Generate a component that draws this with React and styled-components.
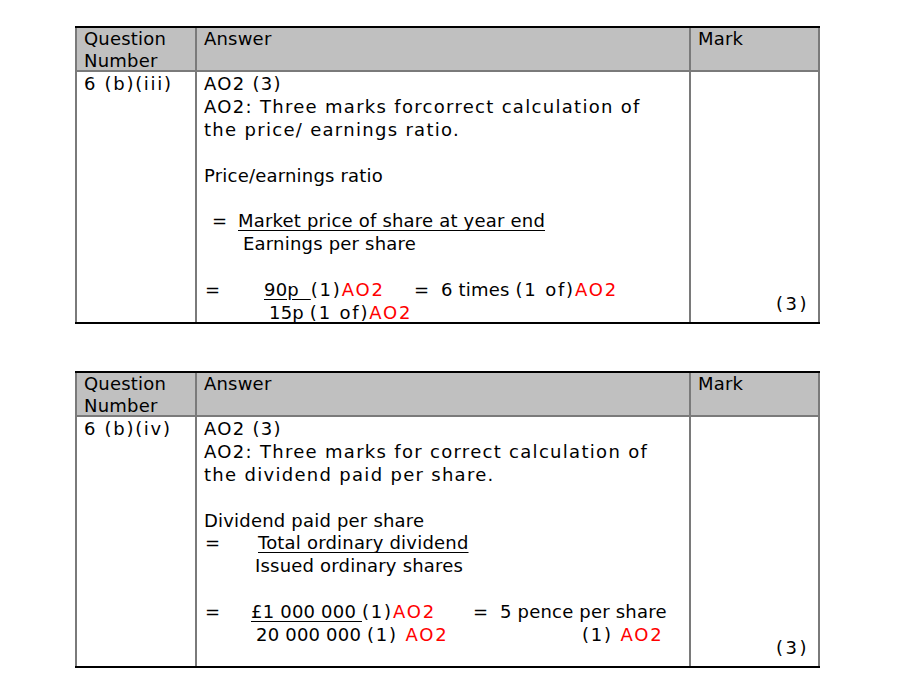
import styled, { createGlobalStyle } from "styled-components";

const GlobalStyle = createGlobalStyle`
  html, body {
    margin: 0;
    padding: 0;
    background: #fff;
  }
  body {
    font-family: "DejaVu Sans", Verdana, sans-serif;
    color: #000;
  }
`;

const Page = styled.div`
  padding: 26px 0 0 75px;
  display: flex;
  flex-direction: column;
  gap: 47px;
`;

const Table = styled.div`
  width: 745px;
  display: grid;
  grid-template-columns: 120px 494px 131px;
  border-top: 2px solid #000;
  border-bottom: 2px solid #000;
  box-sizing: border-box;
  font-size: 18px;
  line-height: 22.9px;
  letter-spacing: 0.2px;
`;

const Cell = styled.div`
  border-left: 2px solid #7a7a7a;
  border-right: ${({ $last }) => ($last ? "2px solid #7a7a7a" : "none")};
  padding: 0 6px 0 7px;
  box-sizing: border-box;
`;

const HeadCell = styled(Cell)`
  background: #c0c0c0;
  height: 44px;
  line-height: 22px;
  border-bottom: 2px solid #7a7a7a;
`;

const BodyCell = styled(Cell)`
  height: ${({ $h }) => $h}px;
  padding-top: 1px;
  letter-spacing: ${({ $wide }) => ($wide ? "1.7px" : "inherit")};
`;

const MarkCell = styled(BodyCell)`
  display: flex;
  align-items: flex-end;
  justify-content: flex-end;
  padding: 0 9px 6px 0;
  letter-spacing: 2.5px;
`;

const Line = styled.div`
  white-space: pre;
  height: 22.9px;
  letter-spacing: ${({ $wide }) => ($wide ? "1.3px" : "inherit")};
`;

const Seg = styled.span`
  display: inline-block;
  width: ${({ $w }) => $w}px;
  padding-left: ${({ $pad }) => $pad || 0}px;
  box-sizing: border-box;
`;

const Under = styled.span`
  text-decoration: underline;
  text-underline-offset: 3px;
`;

const Wide = styled.span`
  letter-spacing: 1.8px;
`;

const Red = styled.span`
  color: #ff0000;
`;

function Header() {
  return (
    <>
      <HeadCell>
        Question
        <br />
        Number
      </HeadCell>
      <HeadCell>Answer</HeadCell>
      <HeadCell $last>Mark</HeadCell>
    </>
  );
}

export default function App() {
  return (
    <>
      <GlobalStyle />
      <Page>
        <Table>
          <Header />
          <BodyCell $h={250} $wide>
            6 (b)(iii)
          </BodyCell>
          <BodyCell $h={250}>
            <Line $wide>AO2 (3)</Line>
            <Line $wide>AO2: Three marks forcorrect calculation of</Line>
            <Line $wide>the price/ earnings ratio.</Line>
            <Line />
            <Line>Price/earnings ratio</Line>
            <Line />
            <Line>
              <Seg $w={34} $pad={8}>=</Seg>
              <Under>Market price of share at year end</Under>
            </Line>
            <Line>
              <Seg $w={39} />
              Earnings per share
            </Line>
            <Line />
            <Line>
              <Seg $w={60} $pad={1}>=</Seg>
              <Seg $w={150}>
                <Under>{"90p  "}</Under>
                <Wide>
                  (1)<Red>AO2</Red>
                </Wide>
              </Seg>
              <Seg $w={27}>=</Seg>
              6 times{" "}
              <Wide>
                (1 of)<Red>AO2</Red>
              </Wide>
            </Line>
            <Line>
              <Seg $w={65} />
              15p{" "}
              <Wide>
                (1 of)<Red>AO2</Red>
              </Wide>
            </Line>
          </BodyCell>
          <MarkCell $h={250} $last>
            (3)
          </MarkCell>
        </Table>

        <Table>
          <Header />
          <BodyCell $h={249} $wide>
            6 (b)(iv)
          </BodyCell>
          <BodyCell $h={249}>
            <Line $wide>AO2 (3)</Line>
            <Line $wide>AO2: Three marks for correct calculation of</Line>
            <Line $wide>the dividend paid per share.</Line>
            <Line />
            <Line>Dividend paid per share</Line>
            <Line>
              <Seg $w={54} $pad={1}>=</Seg>
              <Under>Total ordinary dividend</Under>
            </Line>
            <Line>
              <Seg $w={51} />
              Issued ordinary shares
            </Line>
            <Line />
            <Line>
              <Seg $w={47} $pad={1}>=</Seg>
              <Seg $w={222}>
                <Under>£1 000 000 </Under>
                <Wide>
                  (1)<Red>AO2</Red>
                </Wide>
              </Seg>
              <Seg $w={27}>=</Seg>
              5 pence per share
            </Line>
            <Line>
              <Seg $w={52} />
              <Seg $w={326}>
                20 000 000{" "}
                <Wide>
                  (1) <Red>AO2</Red>
                </Wide>
              </Seg>
              <Wide>
                (1) <Red>AO2</Red>
              </Wide>
            </Line>
          </BodyCell>
          <MarkCell $h={249} $last>
            (3)
          </MarkCell>
        </Table>
      </Page>
    </>
  );
}
